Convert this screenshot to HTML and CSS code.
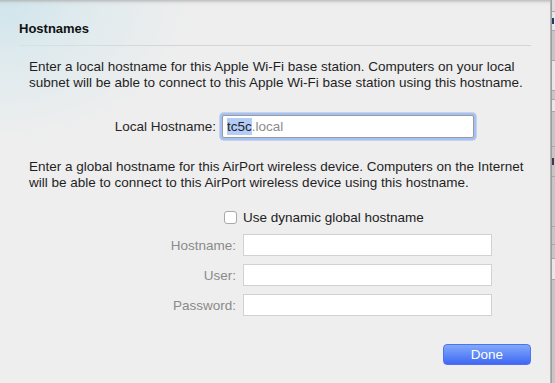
FILE: index.html
```html
<!DOCTYPE html>
<html>
<head>
<meta charset="utf-8">
<link rel="stylesheet" href="styles.css">
</head>
<body>
<div class="screen">
  <div class="sheet">
    <div class="tint"></div>
    <div class="title">Hostnames</div>
    <div class="rule"></div>
    <p class="desc">Enter a local hostname for this Apple Wi-Fi base station. Computers on your local subnet will be able to connect to this Apple Wi-Fi base station using this hostname.</p>
    <div class="local-row">
      <span class="local-label">Local Hostname:</span>
      <div class="field focus"><span class="sel">tc5c</span><span class="suffix">.local</span></div>
    </div>
    <p class="desc desc2">Enter a global hostname for this AirPort wireless device. Computers on the Internet will be able to connect to this AirPort wireless device using this hostname.</p>
    <div class="check-row">
      <span class="checkbox"></span>
      <span class="check-label">Use dynamic global hostname</span>
    </div>
    <div class="grid">
      <span class="glabel">Hostname:</span><div class="gfield"></div>
      <span class="glabel">User:</span><div class="gfield"></div>
      <span class="glabel">Password:</span><div class="gfield"></div>
    </div>
    <div class="actions">
      <button class="done">Done</button>
    </div>
  </div>
  <div class="backdrop">
    <div class="s s1"></div>
    <div class="s s2"><span class="glyph"></span></div>
    <div class="s s3"></div>
    <div class="s s4"></div>
    <div class="s s5"></div>
    <div class="s s6"></div>
    <div class="s s7"></div>
    <div class="s s8"><span class="glyph g2"></span></div>
    <div class="s s9"></div>
    <div class="s s10"></div>
    <div class="s s11"></div>
    <div class="s s12"></div>
    <div class="s s13"></div>
  </div>
</div>
</body>
</html>
```
FILE: styles.css
```css
html, body {
  margin: 0;
  padding: 0;
}
body {
  width: 555px;
  height: 383px;
  overflow: hidden;
  font-family: "Liberation Sans", Arial, sans-serif;
  font-size: 13.5px;
  color: #222;
}
.screen {
  display: flex;
  width: 555px;
  height: 383px;
}
.sheet {
  position: relative;
  width: 551px;
  height: 383px;
  flex: none;
  background: #eeeeee;
  box-sizing: border-box;
  border-right: 1px solid #b4b4b4;
  overflow: hidden;
}
.tint {
  position: absolute;
  left: 0;
  top: 0;
  width: 551px;
  height: 383px;
  background:
    linear-gradient(to bottom, rgba(150,150,150,0.55) 0, rgba(200,200,200,0.2) 3px, rgba(238,238,238,0) 6px),
    radial-gradient(ellipse 190px 140px at 0 0, rgba(205,228,236,0.95) 0, rgba(214,232,238,0.6) 45%, rgba(238,238,238,0) 100%);
  pointer-events: none;
}
.title {
  position: relative;
  margin: 0 0 0 19px;
  padding-top: 21px;
  font-weight: bold;
  font-size: 13px;
  line-height: 16px;
  color: #111;
}
.rule {
  height: 1px;
  margin: 8px 19px 0 19px;
  background: #d4d4d4;
}
.desc {
  position: relative;
  margin: 13px 0 0 29px;
  width: 510px;
  line-height: 16px;
  color: #1f1f1f;
}
.local-row {
  display: flex;
  align-items: center;
  margin-top: 23px;
  height: 25px;
}
.local-label {
  width: 216px;
  text-align: right;
  color: #262626;
}
.field.focus {
  box-sizing: border-box;
  margin-left: 6px;
  width: 252px;
  height: 23px;
  background: #fff;
  border: 1px solid #9a9a9a;
  box-shadow: 0 0 0 2px #a5c0f2, 0 0 0 3px rgba(120,160,235,0.35);
  border-radius: 2px;
  display: flex;
  align-items: center;
  padding-left: 4px;
}
.sel {
  background: #b4cdf7;
  color: #222;
  line-height: 17px;
}
.suffix {
  color: #8c8c8c;
}
.desc2 {
  margin-top: 20px;
}
.check-row {
  display: flex;
  align-items: center;
  margin: 18px 0 0 224px;
  height: 16px;
}
.checkbox {
  box-sizing: border-box;
  width: 13px;
  height: 13px;
  border: 1px solid #a8a8a8;
  border-radius: 3px;
  background: #fff;
}
.check-label {
  margin-left: 6px;
  color: #222;
}
.grid {
  display: grid;
  grid-template-columns: 236px 249px;
  column-gap: 7px;
  row-gap: 8px;
  margin-top: 9px;
  align-items: center;
}
.glabel {
  text-align: right;
  color: #8a8a8a;
}
.gfield {
  box-sizing: border-box;
  height: 22px;
  background: #fff;
  border: 1px solid #d2d2d2;
}
.actions {
  display: flex;
  justify-content: flex-end;
  margin: 28px 19px 0 0;
}
.done {
  width: 88px;
  height: 21px;
  border: 1px solid #4f73f0;
  border-radius: 4px;
  background: linear-gradient(to bottom, #82a9fa 0, #5f8af7 50%, #4068f4 100%);
  color: #fff;
  font-family: "Liberation Sans", Arial, sans-serif;
  font-size: 13.5px;
  padding: 0;
  line-height: 19px;
}
.backdrop {
  flex: 1;
  display: flex;
  flex-direction: column;
  background: #c8c8c8;
  border-left: 1px solid #9e9e9e;
}
.s {
  flex: none;
  border-bottom: 1px solid #a8a8a8;
  overflow: hidden;
  display: flex;
  align-items: center;
}
.glyph {
  display: block;
  width: 2px;
  height: 6px;
  background: #1e3d6e;
}
.g2 { background: #4a3550; height: 7px; }
.s1 { height: 11px; background: #dcdcdc; }
.s2 { height: 18px; background: #e6e6e6; }
.s3 { height: 29px; background: #c6c6c6; }
.s4 { height: 29px; background: #e6e6e6; }
.s5 { height: 8px; background: #c6c6c6; }
.s6 { height: 11px; background: #e6e6e6; }
.s7 { height: 34px; background: #c6c6c6; }
.s8 { height: 29px; background: #c6c6c6; }
.s9 { height: 49px; background: #c6c6c6; }
.s10 { height: 17px; background: #c6c6c6; }
.s11 { height: 13px; background: #c6c6c6; }
.s12 { height: 20px; background: #e6e6e6; }
.s13 { flex: 1; background: #c6c6c6; border-bottom: none; }
```
